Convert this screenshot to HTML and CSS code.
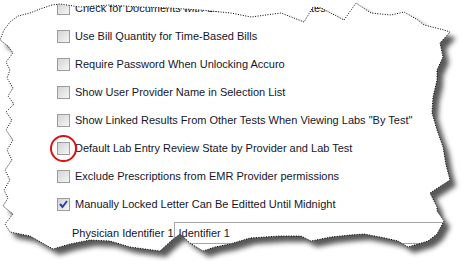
FILE: index.html
```html
<!doctype html>
<html>
    <head>
        <title>Options</title>
        <link rel="stylesheet" href="styles.css">
    </head>
    <body>
        <div class="sheet">
            <svg class="edge-svg" width="463" height="264" viewBox="0 0 463 264">
                <defs>
                    <clipPath id="torn">
                        <polygon id="tornShape" points="52,5 40,9 30,13 18,16 10,22 4,30 0,40 8,46 13,53 6,62 10,70 7,78 13,88 8,96 14,104 6,112 12,120 6,130 13,140 7,150 12,160 5,170 10,180 4,190 8,198 3,206 13,214 5,224 10,232 30,236 53,249 70,244 90,240 110,241 130,247 160,251 172,240 180,234 190,243 203,251 215,247 230,244 250,238 280,236 301,236 311,241 331,237 350,235 364,234 385,238 398,241 408,247 428,241 437,234 444,221 437,211 437,207 430,193 450,180 446,165 443,147 437,130 432,113 433,97 437,80 437,70 443,57 440,43 450,32 444,30 424,25 418,20 404,12 391,15 371,13 356,3 344,20 321,8 313,7 304,22 281,13 251,17 231,13 200,10 170,8 140,7 110,5 80,7 60,4"/>
                    </clipPath>
                    <filter id="blur" x="-10%" y="-10%" width="130%" height="130%">
                        <feGaussianBlur stdDeviation="2.5"/>
                    </filter>
                </defs>
                <use href="#tornShape" class="shadow" filter="url(#blur)" transform="translate(6 6)"/>
            </svg>

            <div class="page">
                <ul class="options">
                    <li class="option"><span class="box"></span>Check for Documents with Same Patient and Dates</li>
                    <li class="option"><span class="box"></span>Use Bill Quantity for Time-Based Bills</li>
                    <li class="option"><span class="box"></span>Require Password When Unlocking Accuro</li>
                    <li class="option"><span class="box"></span>Show User Provider Name in Selection List</li>
                    <li class="option"><span class="box"></span>Show Linked Results From Other Tests When Viewing Labs "By Test"</li>
                    <li class="option"><span class="box"></span>Default Lab Entry Review State by Provider and Lab Test</li>
                    <li class="option"><span class="box"></span>Exclude Prescriptions from EMR Provider permissions</li>
                    <li class="option"><span class="box checked"><svg width="11" height="11" viewBox="0 0 11 11"><polyline points="2,5 4.5,8 9,2" fill="none" stroke="#2b3fa8" stroke-width="2"/></svg></span>Manually Locked Letter Can Be Editted Until Midnight</li>
                </ul>
                <div class="field">
                    <span class="field-label">Physician Identifier 1</span>
                    <div class="field-input">Identifier 1</div>
                </div>
            </div>

            <svg class="edge-svg" width="463" height="264" viewBox="0 0 463 264">
                <use href="#tornShape" class="outline"/>
            </svg>

            <span class="marker"></span>
        </div>
    </body>
</html>
```

FILE: styles.css
```css
html, body {
  margin: 0;
  background: #fff;
  overflow: hidden;
}

body {
  font: 11px "Liberation Sans", Arial, sans-serif;
  color: #15152a;
}

.sheet {
  position: relative;
  width: 463px;
  height: 264px;
}

.edge-svg {
  position: absolute;
  left: 0;
  top: 0;
}

.shadow {
  fill: #3a3a3a;
  opacity: 0.85;
}

.outline {
  fill: none;
  stroke: #000;
  stroke-width: 1;
  stroke-dasharray: 1 1.5;
}

.page {
  position: relative;
  width: 463px;
  height: 264px;
  background: #fff;
  clip-path: url(#torn);
}

.options {
  list-style: none;
  margin: 0;
  padding: 0 0 0 57px;
  position: relative;
  top: -6px;
}

.option {
  display: flex;
  align-items: center;
  gap: 5px;
  height: 28px;
  white-space: nowrap;
}

.box {
  box-sizing: border-box;
  width: 13px;
  height: 13px;
  flex: none;
  border: 1px solid #9c9c9c;
  background: linear-gradient(135deg, #d4d4d4, #f6f6f6);
  display: flex;
  align-items: center;
  justify-content: center;
}

.field {
  display: flex;
  align-items: center;
  padding-left: 72px;
  margin-top: -2px;
  white-space: nowrap;
}

.field-label {
  width: 104px;
}

.field-input {
  box-sizing: border-box;
  width: 300px;
  height: 22px;
  line-height: 20px;
  padding-left: 4px;
  border: 1px solid #a6a6a6;
}

.marker {
  position: absolute;
  left: 50px;
  top: 135px;
  width: 23px;
  height: 23px;
  border: 2px solid #e01010;
  border-radius: 50%;
}
```
